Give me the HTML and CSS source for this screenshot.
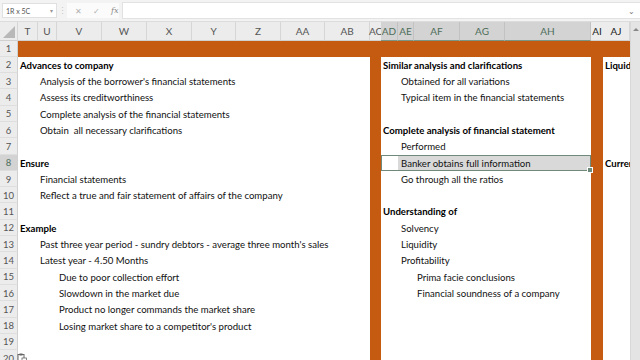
FILE: index.html
```html
<!DOCTYPE html>
<html>
<head>
<meta charset="utf-8">
<link rel="stylesheet" href="styles.css">
</head>
<body>
<div class="app">
  <div class="fbar">
    <div class="namebox"><span class="nb-text">1R x 5C</span><span class="nb-caret">▾</span></div>
    <div class="fsep">⋮</div>
    <div class="fbtns"><span class="fb">✕</span><span class="fb">✓</span><span class="fb fx">fx</span></div>
    <div class="finput"><span class="fi-caret">⌄</span></div>
  </div>

  <div class="sheet">
    <div class="hd corner"><svg width="12" height="12" viewBox="0 0 12 12"><polygon points="12,0 12,12 0,12" fill="#b8b8b8"/></svg></div>
    <div class="hd">T</div>
    <div class="hd">U</div>
    <div class="hd">V</div>
    <div class="hd">W</div>
    <div class="hd">X</div>
    <div class="hd">Y</div>
    <div class="hd">Z</div>
    <div class="hd">AA</div>
    <div class="hd">AB</div>
    <div class="hd narrow">AC</div>
    <div class="hd sel">AD</div>
    <div class="hd sel">AE</div>
    <div class="hd sel">AF</div>
    <div class="hd sel">AG</div>
    <div class="hd sel">AH</div>
    <div class="hd narrow dark">AI</div>
    <div class="hd dark">AJ</div>

    <div class="scroll"><span class="sc-up"></span></div>

    <div class="rh g2">1</div>
    <div class="rh g3">2</div>
    <div class="rh g4">3</div>
    <div class="rh g5">4</div>
    <div class="rh g6">5</div>
    <div class="rh g7">6</div>
    <div class="rh g8">7</div>
    <div class="rh g9 rsel">8</div>
    <div class="rh g10">9</div>
    <div class="rh g11">10</div>
    <div class="rh g12">11</div>
    <div class="rh g13">12</div>
    <div class="rh g14">13</div>
    <div class="rh g15">14</div>
    <div class="rh g16">15</div>
    <div class="rh g17">16</div>
    <div class="rh g18">17</div>
    <div class="rh g19">18</div>
    <div class="rh g20">19</div>
    <div class="rh g21">20</div>

    <div class="band-top"></div>
    <div class="band-ac"></div>
    <div class="band-ai"></div>

    <div class="selection"><span class="active"></span><span class="handle"></span></div>

    <div class="t cT g3 b">Advances to company</div>
    <div class="t cU g4">Analysis of the borrower's financial statements</div>
    <div class="t cU g5">Assess its creditworthiness</div>
    <div class="t cU g6">Complete analysis of the financial statements</div>
    <div class="t cU g7">Obtain &nbsp;all necessary clarifications</div>
    <div class="t cT g9 b">Ensure</div>
    <div class="t cU g10">Financial statements</div>
    <div class="t cU g11">Reflect a true and fair statement of affairs of the company</div>
    <div class="t cT g13 b">Example</div>
    <div class="t cU g14">Past three year period - sundry debtors - average three month's sales</div>
    <div class="t cU g15">Latest year - 4.50 Months</div>
    <div class="t cV g16">Due to poor collection effort</div>
    <div class="t cV g17">Slowdown in the market due</div>
    <div class="t cV g18">Product no longer commands the market share</div>
    <div class="t cV g19">Losing market share to a competitor's product</div>

    <div class="t cAD g3 b">Similar analysis and clarifications</div>
    <div class="t cAE g4">Obtained for all variations</div>
    <div class="t cAE g5">Typical item in the financial statements</div>
    <div class="t cAD g7 b">Complete analysis of financial statement</div>
    <div class="t cAE g8">Performed</div>
    <div class="t cAE g9">Banker obtains full information</div>
    <div class="t cAE g10">Go through all the ratios</div>
    <div class="t cAD g12 b">Understanding of</div>
    <div class="t cAE g13">Solvency</div>
    <div class="t cAE g14">Liquidity</div>
    <div class="t cAE g15">Profitability</div>
    <div class="t cAF g16">Prima facie conclusions</div>
    <div class="t cAF g17">Financial soundness of a company</div>

    <div class="t cAJ g3 b">Liquid</div>
    <div class="t cAJ g9 b">Currer</div>

    <div class="paste"><svg width="10" height="10" viewBox="0 0 10 10"><rect x="1" y="1.5" width="6" height="7.5" fill="none" stroke="#666" stroke-width="1"/><rect x="2.5" y="0.5" width="3" height="2" fill="#666"/><rect x="5" y="5" width="4.5" height="4.5" fill="#fff" stroke="#666" stroke-width="0.8"/></svg></div>
  </div>
</div>
</body>
</html>
```

FILE: styles.css
```css
html, body {
  margin: 0;
  padding: 0;
  width: 640px;
  height: 360px;
  overflow: hidden;
  background: #ffffff;
}

.app {
  width: 640px;
  height: 360px;
  overflow: hidden;
  font-family: Lato, "Open Sans", sans-serif;
  color: #000;
}

/* formula bar */
.fbar {
  height: 22px;
  background: #f3f3f3;
  display: flex;
  align-items: center;
  box-sizing: border-box;
  border-bottom: 1px solid #dcdcdc;
}

.namebox {
  margin-left: 2px;
  width: 55px;
  height: 15px;
  background: #fff;
  border: 1px solid #e0e0e0;
  box-sizing: border-box;
  display: flex;
  align-items: center;
  justify-content: space-between;
  padding: 0 3px;
  font-size: 7px;
  color: #555;
}

.nb-caret {
  font-size: 6px;
  color: #999;
}

.fsep {
  width: 10px;
  text-align: center;
  color: #c8c8c8;
  font-size: 9px;
}

.fbtns {
  width: 52px;
  height: 15px;
  background: #fbfbfb;
  display: flex;
  align-items: center;
  gap: 11px;
  padding-left: 8px;
  box-sizing: border-box;
  color: #b0b0b0;
  font-size: 8px;
}

.fx {
  font-family: "DejaVu Serif", serif;
  font-style: italic;
  color: #8a8a8a;
}

.finput {
  flex: 1;
  height: 17px;
  margin-left: 3px;
  background: #fff;
  border: 1px solid #e2e2e2;
  border-right: none;
  box-sizing: border-box;
  display: flex;
  justify-content: flex-end;
  align-items: center;
  padding-right: 5px;
  color: #777;
  font-size: 8px;
}

/* sheet grid */
.sheet {
  position: relative;
  display: grid;
  grid-template-columns: 18px 20px 19px 45px 45px 45px 44px 45px 44px 45px 11px 17px 16px 46px 45px 86px 12px 27px 10px;
  grid-template-rows: 18.5px repeat(20, 16.3px);
  height: 338px;
}

.hd {
  background: #ececec;
  border-right: 1px solid #d6d6d6;
  border-bottom: 1px solid #d0d0d0;
  box-sizing: border-box;
  font-size: 10px;
  padding-top: 1px;
  color: #555;
  display: flex;
  align-items: center;
  justify-content: center;
  white-space: nowrap;
  overflow: visible;
}

.hd.narrow {
  border-right: none;
}

.hd.sel {
  background: #d3d3d3;
  color: #4e6d5a;
  border-bottom: 1px solid #7a9585;
  border-right: 1px solid #c2c2c2;
}

.hd.dark {
  color: #222;
}

.corner {
  justify-content: flex-end;
  align-items: flex-end;
  padding: 0 2px 2px 0;
}

.scroll {
  grid-column: 19;
  grid-row: 1 / 22;
  background: #e4e4e4;
  border-left: 1px solid #d8d8d8;
  box-sizing: border-box;
  position: relative;
}

.sc-up {
  position: absolute;
  top: 6px;
  left: 2px;
  width: 0;
  height: 0;
  border-left: 3px solid transparent;
  border-right: 3px solid transparent;
  border-bottom: 3px solid #888;
}

.rh {
  grid-column: 1;
  background: #ececec;
  border-right: 1px solid #d0d0d0;
  border-bottom: 1px solid #dedede;
  box-sizing: border-box;
  font-size: 9.5px;
  padding-top: 1px;
  color: #555;
  display: flex;
  align-items: center;
  justify-content: center;
}

.rh.rsel {
  background: #d3d3d3;
  color: #4e6d5a;
}

.band-top {
  grid-column: 2 / 19;
  grid-row: 2;
  background: #c55a11;
}

.band-ac {
  grid-column: 11;
  grid-row: 3 / 22;
  background: #c55a11;
}

.band-ai {
  grid-column: 17;
  grid-row: 3 / 22;
  background: #c55a11;
}

.selection {
  grid-column: 12 / 17;
  grid-row: 9;
  background: #d9d9d9;
  border: 1px solid #6f8a7b;
  box-sizing: border-box;
  position: relative;
  display: flex;
}

.active {
  width: 16px;
  background: #fff;
}

.handle {
  position: absolute;
  right: -3px;
  bottom: -3px;
  width: 4px;
  height: 4px;
  background: #6f8a7b;
  border: 1px solid #fff;
}

.t {
  font-size: 9.6px;
  line-height: 16.3px;
  padding-top: 1px;
  white-space: nowrap;
  padding-left: 2px;
  color: #111;
  z-index: 1;
}

.b { font-weight: 700; color: #000; }

.cT { grid-column: 2 / 11; }
.cU { grid-column: 3 / 11; }
.cV { grid-column: 4 / 11; }
.cAD { grid-column: 12 / 17; }
.cAE { grid-column: 13 / 17; padding-left: 3px; }
.cAF { grid-column: 14 / 17; padding-left: 3px; }
.cAJ { grid-column: 18; overflow: hidden; }

.g2 { grid-row: 2; }
.g3 { grid-row: 3; }
.g4 { grid-row: 4; }
.g5 { grid-row: 5; }
.g6 { grid-row: 6; }
.g7 { grid-row: 7; }
.g8 { grid-row: 8; }
.g9 { grid-row: 9; }
.g10 { grid-row: 10; }
.g11 { grid-row: 11; }
.g12 { grid-row: 12; }
.g13 { grid-row: 13; }
.g14 { grid-row: 14; }
.g15 { grid-row: 15; }
.g16 { grid-row: 16; }
.g17 { grid-row: 17; }
.g18 { grid-row: 18; }
.g19 { grid-row: 19; }
.g20 { grid-row: 20; }
.g21 { grid-row: 21; }

.paste {
  position: absolute;
  left: 17px;
  top: 325px;
  z-index: 2;
}
```
